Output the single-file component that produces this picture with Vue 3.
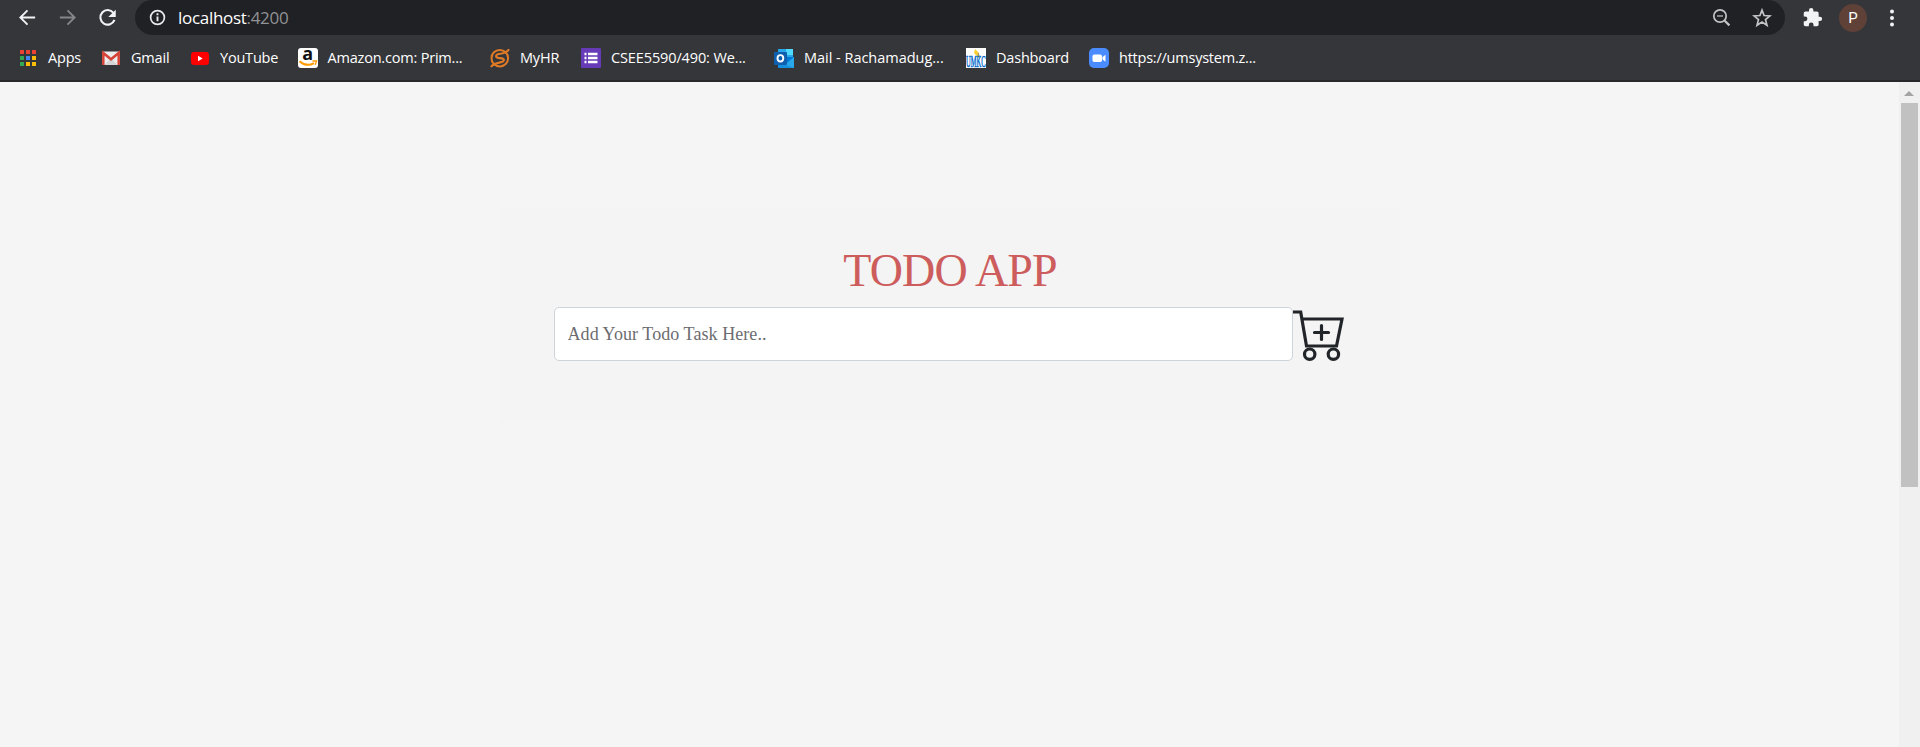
<script setup>
const bookmarks = [
  { icon: 'apps', label: 'Apps', width: 82, gap: 28, spacing: -0.2 },
  { icon: 'gmail', label: 'Gmail', width: 89, gap: 29, spacing: -0.2 },
  { icon: 'youtube', label: 'YouTube', width: 107, gap: 29, spacing: -0.2 },
  { icon: 'amazon', label: 'Amazon.com: Prim...', width: 192, gap: 29.5, spacing: -0.2 },
  { icon: 'myhr', label: 'MyHR', width: 91, gap: 30, spacing: -0.2 },
  { icon: 'form', label: 'CSEE5590/490: We...', width: 193, gap: 30, spacing: -0.12 },
  { icon: 'outlook', label: 'Mail - Rachamadug...', width: 192, gap: 30, spacing: -0.02 },
  { icon: 'umkc', label: 'Dashboard', width: 123, gap: 30, spacing: -0.2 },
  { icon: 'zoom', label: 'https://umsystem.z...', width: 170, gap: 30, spacing: -0.23 },
]
const dots = ['#ea4335', '#ea4335', '#ea4335', '#34a853', '#4285f4', '#fbbc05', '#34a853', '#fbbc05', '#fbbc05']
</script>

<template>
  <div class="window">
    <header class="chrome">
      <div class="toolbar">
        <svg class="nav-icon" viewBox="0 0 24 24"><path d="M20 12H5M12 4.500L4.500 12l7.500 7.500" fill="none" stroke="#f1f3f4" stroke-width="1.900" /></svg>
        <svg class="nav-icon" viewBox="0 0 24 24"><path d="M4 12h15M12 4.500l7.500 7.500-7.500 7.500" fill="none" stroke="#85868a" stroke-width="1.900" /></svg>
        <svg class="nav-icon" viewBox="0 0 24 24"><path d="M18.200 7.200A7.600 7.600 0 1 0 19.300 14.500" fill="none" stroke="#f1f3f4" stroke-width="2.200" /><path d="M20.600 3.800v7.800h-7.800z" fill="#f1f3f4" /></svg>
        <div class="address">
          <svg class="info" viewBox="0 0 18 18"><circle cx="9" cy="9" r="7.300" fill="none" stroke="#e8eaed" stroke-width="1.800" /><path d="M8 4.500h2v2H8zM8 8h2v5H8z" fill="#e8eaed" /></svg>
          <span class="host">localhost</span><span class="port">:4200</span>
          <svg class="magnifier" viewBox="0 0 20 20"><circle cx="8" cy="8" r="6.200" fill="none" stroke="#c3c4c6" stroke-width="1.700" /><path d="M5 8h6" stroke="#a5a6a9" stroke-width="1.500" /><path d="M12.700 12.700l4.700 4.700" stroke="#c3c4c6" stroke-width="2.200" /></svg>
          <svg class="star" viewBox="0 0 20 20"><path d="M10 2.100l2.100 5.400 5.900.4-4.500 3.700 1.500 5.700-5-3.200-5 3.200 1.500-5.700L2 7.900l5.900-.4z" fill="none" stroke="#c3c4c6" stroke-width="1.700" /></svg>
        </div>
        <svg class="puzzle" viewBox="0 0 24 24"><path d="M20.500 11H19V7c0-1.100-.9-2-2-2h-4V3.500a2.500 2.500 0 0 0-5 0V5H4c-1.100 0-2 .9-2 2v3.800h1.500a2.700 2.700 0 0 1 0 5.400H2V20c0 1.100.9 2 2 2h3.800v-1.500a2.700 2.700 0 0 1 5.400 0V22H17c1.100 0 2-.9 2-2v-4h1.500a2.500 2.500 0 0 0 0-5z" fill="#f1f3f4" /></svg>
        <span class="avatar">P</span>
        <svg class="more" viewBox="0 0 6 18"><circle cx="3" cy="2.500" r="2" /><circle cx="3" cy="9" r="2" /><circle cx="3" cy="15.500" r="2" /></svg>
      </div>

      <nav class="bookmarks">
        <a v-for="b in bookmarks" :key="b.icon" class="bookmark" :style="{ width: b.width + 'px' }">
          <span class="favicon" :style="{ width: b.gap + 'px' }">
            <svg v-if="b.icon === 'apps'" viewBox="0 0 20 20"><rect v-for="(c, i) in dots" :key="i" :x="(i % 3) * 6" :y="2 + Math.floor(i / 3) * 6" width="4" height="4" :fill="c" /></svg>
            <svg v-else-if="b.icon === 'gmail'" viewBox="0 0 20 20"><rect x="0" y="3.500" width="18" height="13.500" rx="1.500" fill="#ececec" /><path d="M2.500 17L9 10.500l6.500 6.500z" fill="#d5d5d5" /><path d="M1.300 17V5L9 11.300 16.700 5v12" fill="none" stroke="#d54338" stroke-width="2.500" /></svg>
            <svg v-else-if="b.icon === 'youtube'" viewBox="0 0 20 20"><rect x="0" y="4" width="18" height="13" rx="3" fill="#f00" /><path d="M7 7.800v5.400l4.700-2.700z" fill="#fff" /></svg>
            <svg v-else-if="b.icon === 'amazon'" viewBox="0 0 20 20"><rect width="20" height="20" rx="3" fill="#fff" /><text x="9.700" y="11.800" text-anchor="middle" class="amazon-a">a</text><path d="M1.500 13.200Q8.500 19.300 16 15.100" fill="none" stroke="#f90" stroke-width="2" /><path d="M14.500 13h4l-1.300 3.800" fill="none" stroke="#f90" stroke-width="1.400" /></svg>
            <svg v-else-if="b.icon === 'myhr'" viewBox="0 0 20 20"><g fill="none" stroke="#e07a26"><circle cx="9.800" cy="10.200" r="8.300" stroke-width="2" /><path d="M19 1.200C17 4.500 13 5.500 9 6c-3.500.5-3.800 3.300-.8 3.800l3.600.5c3 .6 2.500 3.400-.6 3.900C7 15 3 15.500 1 19" stroke-width="2.200" /></g></svg>
            <svg v-else-if="b.icon === 'form'" viewBox="0 0 20 20"><rect width="20" height="20" rx="1.200" fill="#673ab7" /><path d="M3.500 6h2M3.500 10h2M3.500 14h2M7 6h9.500M7 10h9.500M7 14h9.500" stroke="#fff" stroke-width="2.400" /></svg>
            <svg v-else-if="b.icon === 'outlook'" viewBox="0 0 20 20"><path d="M4 1h15v10H4z" fill="#28a8ea" /><path d="M12 1h7v6h-7z" fill="#50d9ff" /><path d="M4 9h16v11H4z" fill="#0078d4" /><path d="M20 9v11H7z" fill="#28a8ea" /><path d="M4 14l16 6H6q-2 0-2-2z" fill="#1490df" /><rect x="0" y="4" width="13" height="13" rx="1" fill="#0f5faf" /><ellipse cx="6.400" cy="10.300" rx="2.900" ry="3.200" fill="none" stroke="#fff" stroke-width="1.900" /></svg>
            <svg v-else-if="b.icon === 'umkc'" viewBox="0 0 20 20"><rect width="20" height="20" fill="#fff" /><path d="M9 1l4 4v5L8 5z" fill="#fbd02f" /><path d="M12 5l2 5" stroke="#888" /><g transform="translate(0 19.300) scale(.4 1)"><text class="umkc" textLength="49" lengthAdjust="spacingAndGlyphs">UMKC</text></g></svg>
            <svg v-else viewBox="0 0 20 20"><rect width="20" height="20" rx="5" fill="#4a8cff" /><rect x="3.500" y="6.500" width="9.500" height="7.500" rx="1.700" fill="#fff" /><path d="M13.500 9l3-2.300v7l-3-2.200z" fill="#fff" /></svg>
          </span>
          <span class="label" :style="{ letterSpacing: b.spacing + 'px' }">{{ b.label }}</span>
        </a>
      </nav>
    </header>

    <div class="viewport">
      <main class="page">
        <section class="panel">
          <h1>TODO APP</h1>
          <div class="entry">
            <input type="text" placeholder="Add Your Todo Task Here.." />
            <svg class="cart" viewBox="0 0 54 54"><g fill="none" stroke="#212529" stroke-width="3.200"><path d="M0 5h7.700L13.500 39h30L49 12H9" /><circle cx="16.700" cy="47.200" r="5.200" /><circle cx="40.400" cy="47.200" r="5.200" /><path d="M28.500 18.500v14M21.500 25.500h14" stroke-linecap="round" /></g></svg>
          </div>
        </section>
      </main>
      <aside class="scrollbar">
        <svg class="arrow" viewBox="0 0 10 5"><path d="M0 5L5 0l5 5z" fill="#a3a3a3" /></svg>
        <div class="thumb"></div>
      </aside>
    </div>
  </div>
</template>

<style>
body { margin: 0; overflow: hidden; }
</style>

<style scoped>
.window { width: 1920px; height: 747px; display: flex; flex-direction: column; overflow: hidden; background: #f5f5f5; }
svg { display: block; flex: none; }
.chrome { height: 82px; box-sizing: border-box; background: #35363a; border-bottom: 2px solid #282729; font-family: "Open Sans", "Noto Sans", sans-serif; color: #fff; }
.toolbar { height: 35px; display: flex; align-items: center; padding-left: 16px; }
.nav-icon { width: 23px; height: 23px; margin-right: 17px; }
.address { width: 1650px; height: 35px; box-sizing: border-box; display: flex; align-items: center; margin-left: -1px; padding-left: 14px; border-radius: 18px; background: #202124; font-size: 17px; }
.info { width: 17px; height: 17px; margin-right: 12px; }
.host, .port { line-height: 35px; letter-spacing: -0.3px; }
.port { color: #919295; }
.magnifier { width: 20px; height: 20px; margin-left: auto; }
.star { width: 20px; height: 20px; margin: 0 13px 0 20px; }
.puzzle { width: 21px; height: 21px; margin-left: 17px; }
.avatar { width: 28px; height: 28px; margin: 1px 0 0 16px; border-radius: 50%; background: #5f4137; font: 15px/28px Roboto, sans-serif; text-align: center; }
.more { width: 6px; height: 18px; margin-left: 22px; fill: #f1f3f4; }
.bookmarks { height: 45px; display: flex; align-items: center; padding-left: 20px; }
.bookmark { display: flex; align-items: center; flex: none; }
.favicon { flex: none; }
.favicon svg { width: 20px; height: 20px; }
.label { font-size: 14.500px; line-height: 20px; white-space: nowrap; }
.amazon-a { font: bold 18px "Open Sans", sans-serif; fill: #111; }
.umkc { font: 16px "Liberation Serif", serif; fill: #0066cc; stroke: #0066cc; stroke-width: 0.6px; }
.viewport { flex: 1; display: flex; }
.page { flex: 1; display: flex; flex-direction: column; align-items: center; padding-top: 126px; }
.panel { width: 900px; height: 214px; box-sizing: border-box; padding: 36px 53px 0 54px; background: #f4f4f4; font-family: "Liberation Serif", serif; }
h1 { margin: 0 0 9px; font-size: 46px; font-weight: 400; line-height: 54px; letter-spacing: -0.850px; text-align: center; color: #cd5c5c; }
.entry { display: flex; }
input { width: 739px; height: 54px; box-sizing: border-box; margin: 0; padding: 0 13px; border: 1px solid #ced4da; border-radius: 5px; background: #fff; font: 18px "Liberation Serif", serif; letter-spacing: 0.070px; }
input::placeholder { color: #6c6c70; opacity: 1; }
.cart { width: 54px; height: 54px; }
</style>

<style scoped>
.scrollbar { width: 21px; box-sizing: border-box; padding: 9px 2px 0; background: #f0f0f0; }
.arrow { width: 10px; height: 5px; margin: 0 0 7px 3px; }
.thumb { height: 384px; background: #c1c1c1; }
.entry { margin-right: -1px; }
.entry input { flex: 0 0 739px; }
</style>
